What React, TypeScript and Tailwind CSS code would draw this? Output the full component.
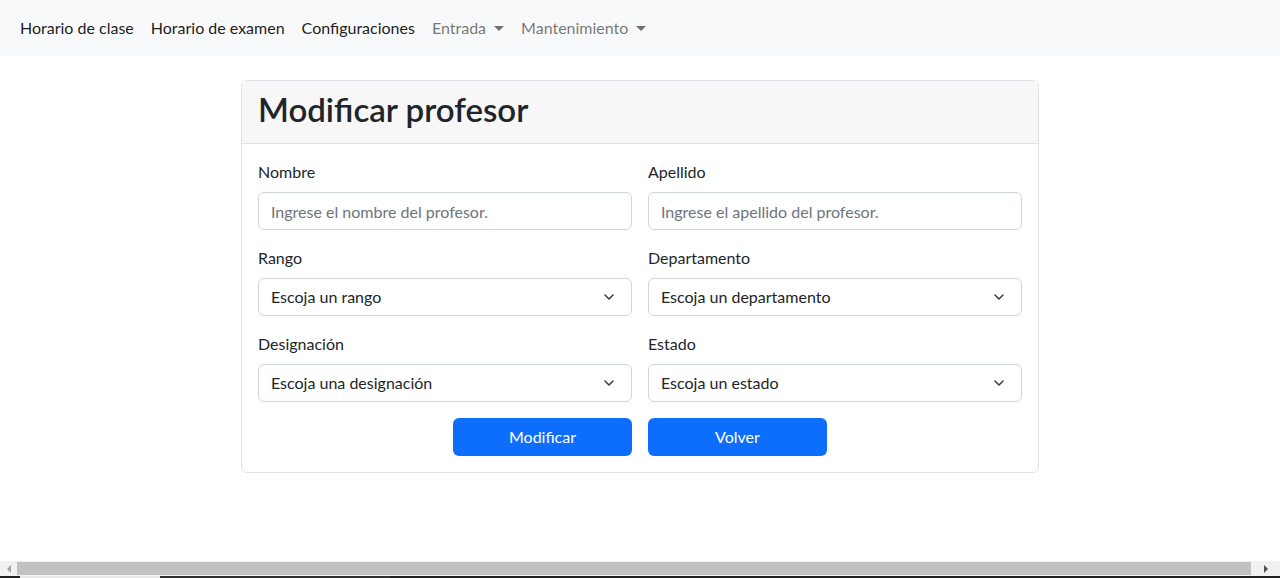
import { ChevronDown } from "lucide-react"

const font = { fontFamily: "Lato, 'Noto Sans', sans-serif" }

function Field({ label, placeholder }: { label: string; placeholder: string }) {
  return (
    <div className="flex flex-col">
      <label className="mb-2 text-base leading-6 text-[#212529]">{label}</label>
      <input
        className="h-[38px] rounded-md border border-[#ced4da] px-3 text-base text-[#212529] placeholder:text-[#6c757d] outline-none"
        placeholder={placeholder}
      />
    </div>
  )
}

function SelectField({ label, value }: { label: string; value: string }) {
  return (
    <div className="flex flex-col">
      <label className="mb-2 text-base leading-6 text-[#212529]">{label}</label>
      <div className="flex h-[38px] items-center justify-between rounded-md border border-[#ced4da] pl-3 pr-[14px] text-base text-[#212529]">
        <span>{value}</span>
        <ChevronDown className="h-4 w-4 text-[#343a40]" strokeWidth={2.25} />
      </div>
    </div>
  )
}

export default function App() {
  return (
    <div className="flex h-screen flex-col overflow-hidden bg-white" style={font}>
      <nav className="flex h-14 shrink-0 items-center bg-[#f8f9fa] px-3">
        <a className="px-2 text-base text-black/90">Horario de clase</a>
        <a className="pl-[9px] pr-2 text-base text-black/90">Horario de examen</a>
        <a className="pl-[9px] pr-2 text-base text-black/90">Configuraciones</a>
        <a className="flex items-center pl-[9px] pr-2 text-base text-black/55">
          Entrada
          <span className="ml-2 mt-[1px] h-0 w-0 border-x-[5px] border-t-[5px] border-x-transparent border-t-black/55" />
        </a>
        <a className="flex items-center pl-[9px] pr-2 text-base text-black/55">
          Mantenimiento
          <span className="ml-2 mt-[1px] h-0 w-0 border-x-[5px] border-t-[5px] border-x-transparent border-t-black/55" />
        </a>
      </nav>

      <main className="flex-1 pt-6">
        <div className="mx-auto w-[798px] rounded-md border border-[#dee2e6]">
          <div className="flex h-[63px] items-center border-b border-[#dee2e6] bg-[#f7f7f7] px-4 pb-[5px]">
            <h1 className="text-[33px] font-semibold leading-none text-[#212529]">Modificar profesor</h1>
          </div>
          <div className="flex flex-col gap-4 p-4">
            <div className="grid grid-cols-2 gap-4">
              <Field label="Nombre" placeholder="Ingrese el nombre del profesor." />
              <Field label="Apellido" placeholder="Ingrese el apellido del profesor." />
            </div>
            <div className="grid grid-cols-2 gap-4">
              <SelectField label="Rango" value="Escoja un rango" />
              <SelectField label="Departamento" value="Escoja un departamento" />
            </div>
            <div className="grid grid-cols-2 gap-4">
              <SelectField label="Designación" value="Escoja una designación" />
              <SelectField label="Estado" value="Escoja un estado" />
            </div>
            <div className="flex justify-center gap-4">
              <button className="h-[38px] w-[179px] rounded-md bg-[#0d6efd] text-base text-white">Modificar</button>
              <button className="h-[38px] w-[179px] rounded-md bg-[#0d6efd] text-base text-white">Volver</button>
            </div>
          </div>
        </div>
      </main>

      {/* fake horizontal scrollbar */}
      <div className="flex h-[15px] shrink-0 items-center bg-[#f1f1f1]">
        <div className="flex w-[17px] justify-center">
          <span className="h-0 w-0 border-y-[4px] border-r-[4px] border-y-transparent border-r-[#a3a3a3]" />
        </div>
        <div className="h-[13px] flex-1 bg-[#c1c1c1]" />
        <div className="flex w-[29px] justify-center">
          <span className="h-0 w-0 border-y-[4px] border-l-[4px] border-y-transparent border-l-[#505050]" />
        </div>
      </div>
      <div className="flex h-[2px] shrink-0">
        <div className="w-5 bg-[#202020]" />
        <div className="w-[140px] bg-[#e8e8e8]" />
        <div className="w-[230px] bg-[#303030]" />
        <div className="flex-1 bg-[#202020]" />
      </div>
    </div>
  )
}
